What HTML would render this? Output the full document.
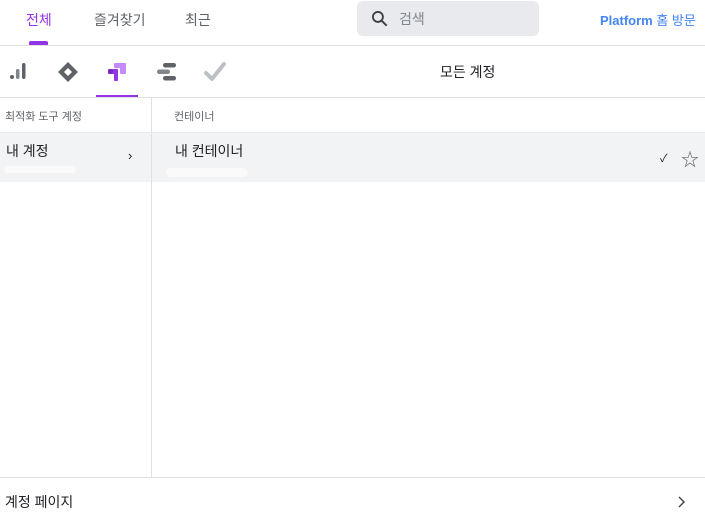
<!DOCTYPE html>
<html><head><meta charset="utf-8"><style>
*{margin:0;padding:0;box-sizing:border-box}
body{width:705px;height:518px;background:#fff;font-family:"Liberation Sans","Noto Sans CJK KR",sans-serif;color:#202124;position:relative;overflow:hidden}
.a{position:absolute}
</style></head><body>
<div class="a" style="left:26px;top:10px;font-size:14px;color:#9334e6">전체</div>
<div class="a" style="left:29px;top:41px;width:19px;height:4px;background:#9334e6;border-radius:2px 2px 0 0"></div>
<div class="a" style="left:94px;top:10px;font-size:14px;color:#5f6368">즐겨찾기</div>
<div class="a" style="left:185px;top:10px;font-size:14px;color:#5f6368">최근</div>
<div class="a" style="left:357px;top:1px;width:182px;height:35px;background:#e8eaed;border-radius:6px"></div>
<svg class="a" style="left:370px;top:9px" width="20" height="20" viewBox="0 0 24 24"><circle cx="9.5" cy="9.5" r="6" fill="none" stroke="#3c4043" stroke-width="2.2"/><path d="M14 14l6 6" stroke="#3c4043" stroke-width="2.4"/></svg>
<div class="a" style="left:399px;top:9px;font-size:14px;color:#80868b">검색</div>
<div class="a" style="left:600px;top:10px;font-size:13px;color:#4285f4;font-weight:bold">Platform <span style="font-weight:normal">홈 방문</span></div>
<div class="a" style="left:0;top:45px;width:705px;height:1px;background:#e0e0e0"></div>
<svg class="a" style="left:9px;top:61px" width="20" height="20" viewBox="0 0 20 20"><circle cx="3" cy="16" r="2" fill="#5f6368"/><rect x="7" y="8" width="3.5" height="10" rx="1.7" fill="#80868b"/><rect x="13" y="2" width="3.5" height="16" rx="1.7" fill="#5f6368"/></svg>
<svg class="a" style="left:57px;top:61px" width="22" height="22" viewBox="0 0 22 22"><path d="M11 1L21 11 11 21 1 11Z" fill="#5f6368"/><path d="M11 7L15 11 11 15 7 11Z" fill="#fff"/></svg>
<svg class="a" style="left:107px;top:61px" width="22" height="22" viewBox="0 0 22 22"><rect x="7" y="2" width="12" height="5" rx="1" fill="#c58af9"/><rect x="13" y="2" width="6" height="11" rx="1" fill="#c58af9"/><rect x="1" y="8" width="10" height="5" rx="1" fill="#9334e6"/><rect x="7" y="8" width="4" height="12" rx="1" fill="#9334e6"/><circle cx="3.5" cy="10.5" r="2.5" fill="#7627bb"/></svg>
<div class="a" style="left:96px;top:95px;width:42px;height:3px;background:#9334e6"></div>
<svg class="a" style="left:156px;top:62px" width="22" height="20" viewBox="0 0 22 20"><rect x="7" y="1" width="13" height="4.5" rx="2.2" fill="#5f6368"/><rect x="1" y="7.5" width="13" height="4.5" rx="2.2" fill="#80868b"/><rect x="7" y="14" width="13" height="4.5" rx="2.2" fill="#5f6368"/></svg>
<svg class="a" style="left:203px;top:61px" width="24" height="22" viewBox="0 0 24 22"><path d="M3 12l6 6L21 3" fill="none" stroke="#bdc1c6" stroke-width="4" stroke-linecap="round" stroke-linejoin="round"/></svg>
<div class="a" style="left:440px;top:62px;font-size:14px">모든 계정</div>
<div class="a" style="left:0;top:97px;width:705px;height:1px;background:#e0e0e0"></div>
<div class="a" style="left:151px;top:98px;width:1px;height:379px;background:#e0e0e0"></div>
<div class="a" style="left:5px;top:108px;font-size:11px;color:#5f6368">최적화 도구 계정</div>
<div class="a" style="left:174px;top:108px;font-size:11px;color:#5f6368">컨테이너</div>
<div class="a" style="left:0;top:132px;width:705px;height:1px;background:#e8eaed"></div>
<div class="a" style="left:0;top:133px;width:151px;height:49px;background:#f1f3f4"></div>
<div class="a" style="left:152px;top:133px;width:553px;height:49px;background:#f1f3f4"></div>
<div class="a" style="left:6px;top:141px;font-size:14px">내 계정</div>
<div class="a" style="left:4px;top:166px;width:72px;height:7px;background:#fafafa;border-radius:4px"></div>
<div class="a" style="left:128px;top:148px;font-size:13px">›</div>
<div class="a" style="left:175px;top:141px;font-size:14px">내 컨테이너</div>
<div class="a" style="left:166px;top:168px;width:82px;height:9px;background:#fafafa;border-radius:5px"></div>
<div class="a" style="left:660px;top:150px;font-size:11px">✓</div>
<div class="a" style="left:681px;top:146px;font-size:18px;color:#5f6368">☆</div>
<div class="a" style="left:0;top:477px;width:705px;height:1px;background:#e0e0e0"></div>
<div class="a" style="left:5px;top:492px;font-size:14px">계정 페이지</div>
<svg class="a" style="left:677px;top:496px" width="9" height="12" viewBox="0 0 9 12"><path d="M2 1l5 5-5 5" fill="none" stroke="#3c4043" stroke-width="1.4"/></svg>
</body></html>
